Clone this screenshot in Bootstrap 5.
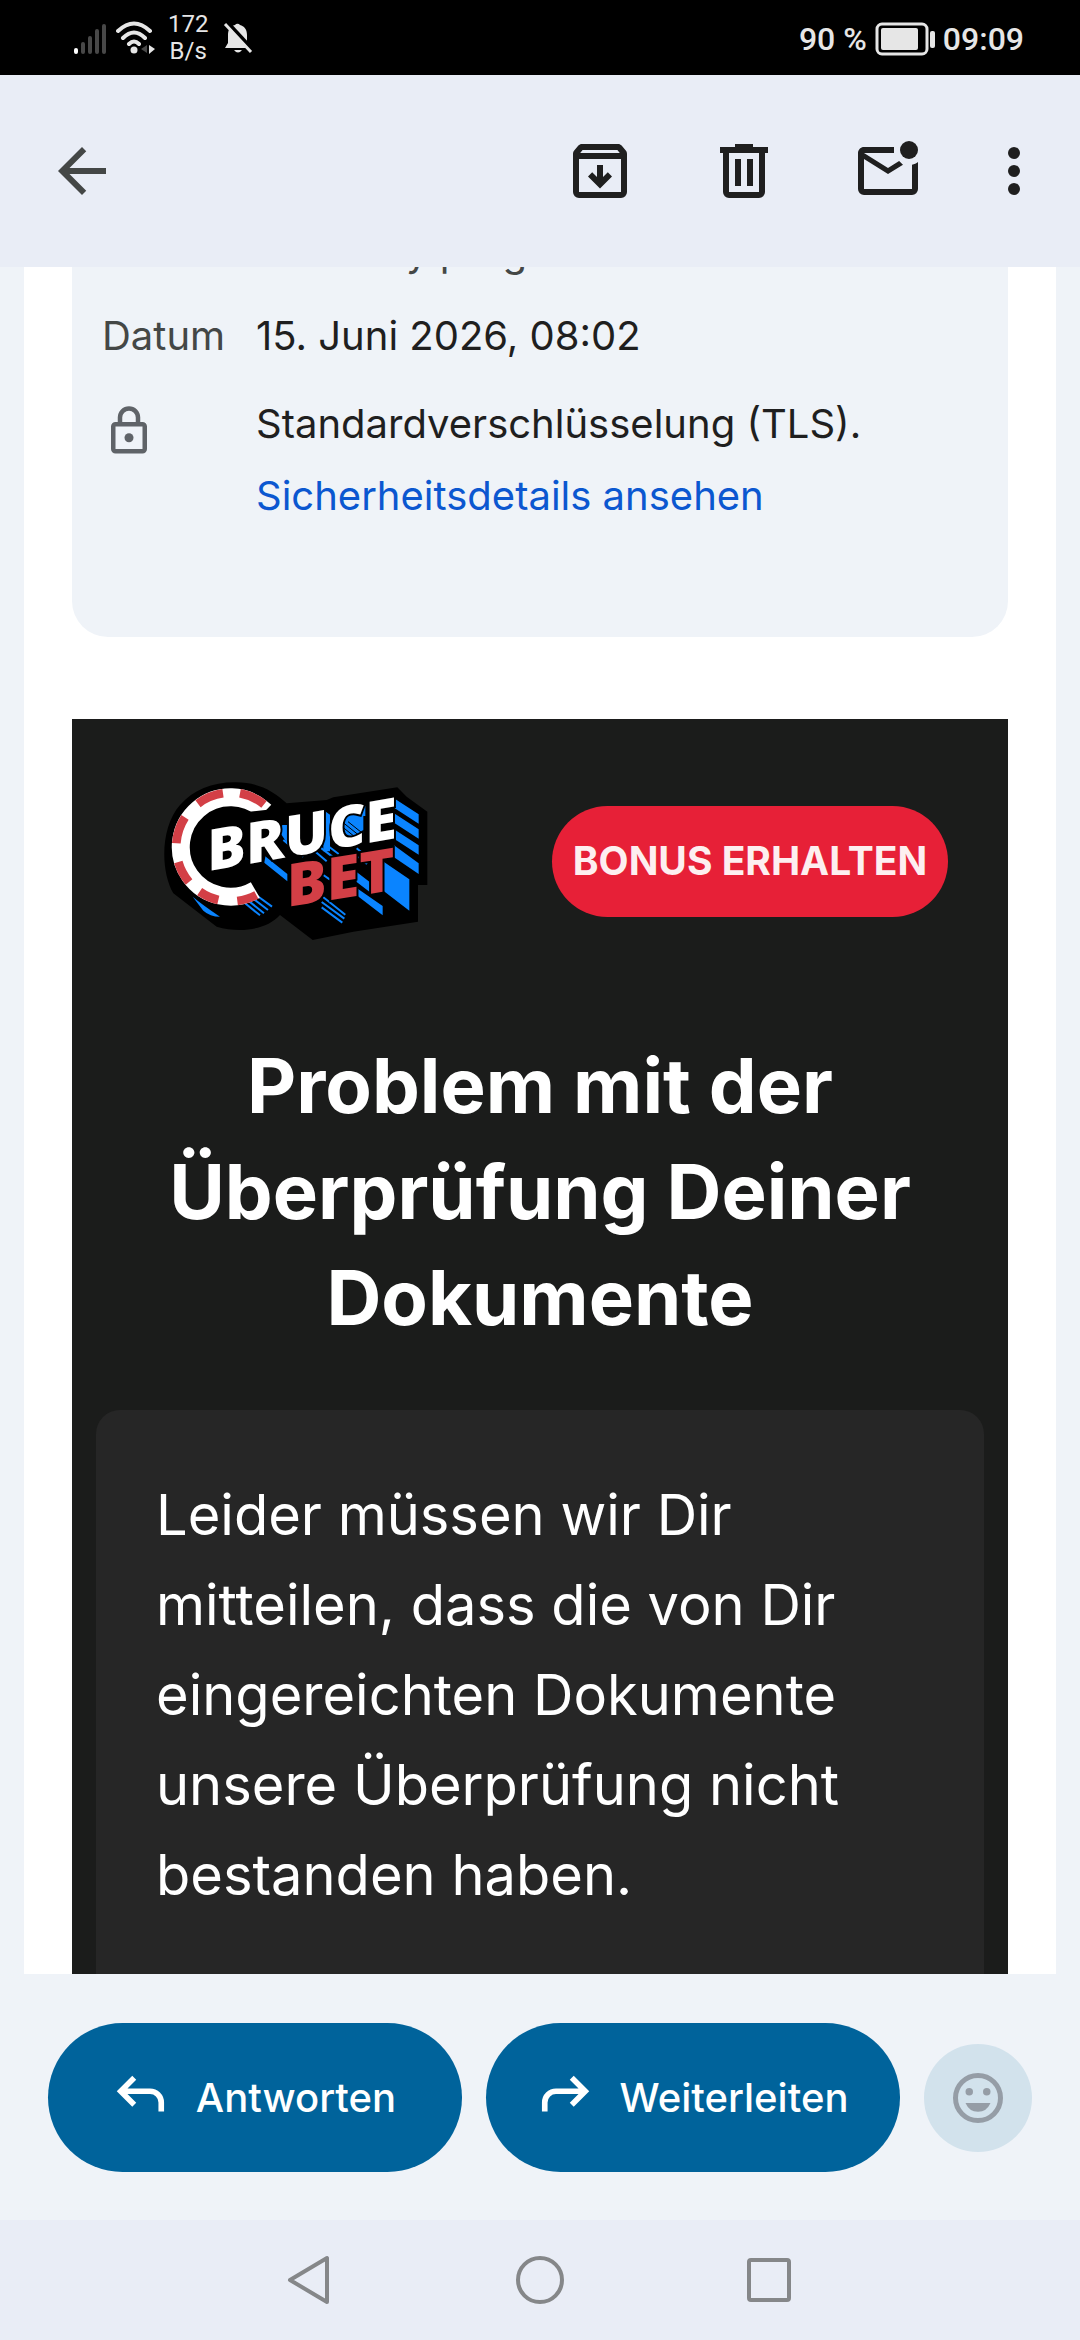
<!DOCTYPE html>
<html lang="de">
<head>
<meta charset="utf-8">
<meta name="viewport" content="width=device-width, initial-scale=1">
<title>E-Mail</title>
<link href="https://cdn.jsdelivr.net/npm/bootstrap@5.3.0/dist/css/bootstrap.min.css" rel="stylesheet">
<style>
  body { font-family: Inter, "Liberation Sans", sans-serif; background: #eff3f8; color: #1f1f1f; font-size: 40px; line-height: 72px; }
  svg { display: block; flex: none; }
  .status-bar { background: #000; color: #e6e6e6; height: 75px; padding: 0 56px 0 72px; font-family: Roboto, sans-serif; font-size: 34px; line-height: 40px; }
  .net-speed { font-size: 24px; line-height: 27px; margin: 0 14px 0 12px; }
  .clock-group { font-size: 32px; font-weight: 500; padding-top: 2px; }
  .app-bar { background: #e9edf6; height: 192px; padding: 0 30px 0 46px; }
  .app-tools { gap: 72px; }
  .icon-btn { background: none; border: 0; padding: 0; color: #1f1f1f; }
  .dots-btn { margin-left: -18px; }
  .back-btn { color: #444746; }
  .mail-sheet { background: #fff; margin: 0 24px; padding: 0 48px; }
  .mail-details { background: #eff3f8; border-radius: 0 0 36px 36px; padding: 0 30px 105px; }
  .cut-line { height: 8px; overflow: hidden; color: #444746; line-height: 46px; padding-left: 304px; }
  .detail-label { width: 154px; flex: none; color: #444746; }
  .detail-list { padding-top: 25px; gap: 16px; }
  .detail-link { color: #0b57d0; }
  .promo { background: #1b1c1b; color: #fff; margin-top: 82px; padding: 0 24px; }
  .promo-head { padding: 62px 36px 91px 68px; }
  .bonus-btn, .bonus-btn:hover { background: #e72037; color: #fdeff0; height: 111px; width: 396px; border-radius: 56px; border: 0; font-weight: 700; font-size: 39px; padding: 0; white-space: nowrap; }
  .promo-title { font-size: 76px; line-height: 106px; font-weight: 700; margin: 0 0 60px; }
  .promo-body { background: #262626; border-radius: 24px 24px 0 0; padding: 60px 60px 54px; font-size: 56px; line-height: 90px; }
  .reply-bar { padding: 49px 48px 48px; gap: 24px; }
  .reply-btn, .reply-btn:hover { background: #00639b; color: #fff; height: 149px; border: 0; border-radius: 75px; font-size: 40px; font-weight: 500; gap: 28px; padding: 0; flex: 1 1 0; }
  .emoji-btn { width: 108px; height: 108px; background: #d2e2ec; border: 0; padding: 0; color: #959da6; flex: none; }
  .nav-keys { background: #e9edf6; height: 120px; gap: 169px; }
</style>
<script src="https://cdn.jsdelivr.net/npm/bootstrap@5.3.0/dist/js/bootstrap.bundle.min.js"></script>
</head>
<body class="d-flex flex-column min-vh-100">

<div class="status-bar d-flex align-items-center justify-content-between">
  <div class="d-flex align-items-center">
    <svg width="36" height="34" viewBox="0 0 36 34" stroke-width="4" stroke-linecap="round"><path d="M4 29v2" stroke="#fff"/><path d="M11 23v8M18 17v14M25 10v21M32 5v26" stroke="#484848"/></svg>
    <svg class="ms-2" width="40" height="34" viewBox="0 0 40 34" fill="none" stroke="#e6e6e6" stroke-width="4" stroke-linecap="round"><path d="M2 10Q18-5 34 10M7 17Q18 6 29 17M13 23Q18 18 23 23"/><circle cx="18" cy="29" r="3.500" fill="#e6e6e6" stroke="none"/><path d="M33 24v9l6-5z" fill="#e6e6e6" stroke="none"/><path d="M31 24v8l-6-4z" fill="#484848" stroke="none"/></svg>
    <div class="net-speed text-center">172<br>B/s</div>
    <svg width="32" height="34" viewBox="0 0 32 34"><path d="M3 27h26l-4-6V14c0-6-3-9-7-10a3 3 0 0 0-5 0C8 5 6 9 6 14v8zM12 29h8q-4 5-8 0" fill="#e6e6e6"/><path d="M5 1l26 28" stroke="#000" stroke-width="4"/><path d="M3 3l26 28" stroke="#e6e6e6" stroke-width="3"/></svg>
  </div>
  <div class="clock-group d-flex align-items-center">
    <span>90 %</span>
    <svg class="ms-2" width="60" height="34" viewBox="0 0 60 34"><rect x="2" y="2" width="50" height="30" rx="5" fill="none" stroke="#e6e6e6" stroke-width="3"/><rect x="6" y="6" width="37" height="22" rx="2" fill="#e6e6e6"/><rect x="55" y="9" width="5" height="17" rx="2" fill="#e6e6e6"/></svg>
    <span class="ms-2">09:09</span>
  </div>
</div>

<header class="app-bar d-flex align-items-center justify-content-between">
  <button class="icon-btn back-btn" type="button" aria-label="Zurück"><svg width="72" height="72" viewBox="0 0 24 24" fill="currentColor"><path d="M20 11H7.830l5.590-5.590L12 4l-8 8 8 8 1.410-1.410L7.830 13H20z"/></svg></button>
  <div class="app-tools d-flex align-items-center">
    <button class="icon-btn" type="button" aria-label="Archivieren"><svg width="72" height="72" viewBox="0 0 24 24" fill="currentColor"><path fill-rule="evenodd" d="M6 3h12c.5 0 .9.200 1.200.5l1.400 1.700c.3.400.4.700.4 1.200V19a2 2 0 0 1-2 2H5a2 2 0 0 1-2-2V6.400c0-.5.100-.8.400-1.200l1.400-1.700C5.100 3.200 5.500 3 6 3zM6.200 5l-.8 1h13.200l-.8-1zM5 8v11h14V8zM11 10h2v4l1.600-1.600L16 13.800l-4 4-4-4 1.400-1.400L11 14z"/></svg></button>
    <button class="icon-btn" type="button" aria-label="Löschen"><svg width="72" height="72" viewBox="0 0 24 24" fill="currentColor"><path fill-rule="evenodd" d="M9 3h6v1h5v2h-1v13a2 2 0 0 1-2 2H7a2 2 0 0 1-2-2V6H4V4h5zM7 6v13h10V6zM9 8h2v9H9zM13 8h2v9h-2z"/></svg></button>
    <button class="icon-btn" type="button" aria-label="Als ungelesen markieren"><svg width="72" height="72" viewBox="0 0 24 24" fill="currentColor"><circle cx="19" cy="5" r="3"/><path d="M22 9v9a2 2 0 0 1-2 2H4a2 2 0 0 1-2-2V6c0-1.100.9-2 2-2h10v2H4l8 5 3.700-2.300 1.300 1.200-5 3.100-8-5v10h16V9.900c.8-.1 1.400-.4 2-.9z"/></svg></button>
    <button class="icon-btn dots-btn" type="button" aria-label="Weitere Optionen"><svg width="72" height="72" viewBox="0 0 24 24" fill="currentColor"><circle cx="12" cy="6" r="2"/><circle cx="12" cy="12" r="2"/><circle cx="12" cy="18" r="2"/></svg></button>
  </div>
</header>

<main class="mail-sheet flex-grow-1 d-flex flex-column">
  <section class="mail-details">
    <div class="cut-line d-flex align-items-end">y prog</div>
    <div class="detail-list d-flex flex-column">
      <div class="d-flex"><span class="detail-label">Datum</span><span>15. Juni 2026, 08:02</span></div>
      <div class="d-flex">
        <span class="detail-label pt-2"><svg class="mt-2" width="54" height="54" viewBox="0 0 24 24" fill="#5f6368"><path fill-rule="evenodd" d="M7 8V6a5 5 0 0 1 10 0v2h1a2 2 0 0 1 2 2v10a2 2 0 0 1-2 2H6a2 2 0 0 1-2-2V10a2 2 0 0 1 2-2zM9 8h6V6a3 3 0 0 0-6 0zM6 10v10h12V10z"/><circle cx="12" cy="15" r="2"/></svg></span>
        <div>Standardverschlüsselung (TLS).<br><a class="detail-link text-decoration-none" href="#">Sicherheitsdetails ansehen</a></div>
      </div>
    </div>
  </section>

  <article class="promo flex-grow-1 d-flex flex-column">
    <div class="promo-head d-flex align-items-center justify-content-between">
      <svg width="264" height="160" viewBox="72 63 792 480" role="img" aria-label="Bruce Bet">
        <path d="M285 67C350 66 400 92 440 130L560 120 580 112 772 82 800 110 862 155V375H834V485L640 515 518 540 420 465C380 510 300 520 230 500L100 400C60 330 62 200 120 135 160 90 215 67 285 67z" fill="#000"/>
        <g fill="#0a84ff">
          <path d="M158 410q30 25 82 60-30 0-50-18z"/>
          <path d="M370 284l72 58v22l-72-58zM405 195l40 60v-60zM550 150l20 14v110h-20zM595 165h75v75h-75zM664 138h12v30h-12z"/>
          <path d="M762 115l74 48v28l-74-48zM762 160l74 48v28l-74-48zM762 208l74 48v28l-74-48zM762 256l74 54v32l-74-50zM732 306l76 52v94l-76-58z"/>
          <path d="M650 336l44 34v30l-44-34zM650 384l78 54v28l-78-60z"/>
        </g>
        <g stroke="#0a84ff" stroke-width="6" fill="none">
          <path d="M308 424l52 42M320 418l52 42M332 410l52 40M344 402l52 38"/>
          <path d="M430 240l60 50M445 235l60 50M520 270l40 34M525 250l60 46M540 240l56 42M650 265l24 20M655 290l26 22"/>
          <path d="M545 442l62 46M545 426l68 50M550 412l66 52M550 345l20 14"/>
        </g>
        <path d="M600 195l50 40M612 190l50 40M624 185l50 40" stroke="#000" stroke-width="3"/>
        <path d="M375 154A149 149 0 1 0 346 390" fill="none" stroke="#fff" stroke-width="54"/>
        <path d="M300 100A163 163 0 0 1 372 133M174 131A163 163 0 0 1 249 100M109 250A163 163 0 0 1 135 172M115 306A163 163 0 0 0 147 366M179 395A163 163 0 0 0 235 420M292 423A163 163 0 0 0 349 405" fill="none" stroke="#d33f46" stroke-width="26"/>
        <path d="M300 158l130-14v50l-40 20-20 110-70 30z" fill="#000"/>
        <g font-family="'Open Sans', sans-serif" font-weight="800" stroke="#000" stroke-width="12" paint-order="stroke">
          <text transform="translate(202 334) skewY(-10)" font-size="172" fill="#fff">BRUCE</text>
          <text transform="translate(440 441) skewY(-9)" font-size="178" fill="#d33f46">BET</text>
        </g>
      </svg>
      <button class="btn bonus-btn" type="button">BONUS ERHALTEN</button>
    </div>
    <h1 class="promo-title text-center">Problem mit der Überprüfung Deiner Dokumente</h1>
    <p class="promo-body flex-grow-1 mb-0">Leider müssen wir Dir mitteilen, dass die von Dir eingereichten Dokumente unsere Überprüfung nicht bestanden haben.</p>
  </article>
</main>

<div class="reply-bar d-flex align-items-center">
  <button class="btn reply-btn d-flex align-items-center justify-content-center" type="button"><svg width="54" height="54" viewBox="0 0 24 24" fill="none" stroke="#fff" stroke-width="2.500"><path d="M9 3L3 9l6 6M3 9h13a5 5 0 0 1 5 5v4"/></svg>Antworten</button>
  <button class="btn reply-btn d-flex align-items-center justify-content-center" type="button"><svg width="54" height="54" viewBox="0 0 24 24" fill="none" stroke="#fff" stroke-width="2.500"><path d="M15 3l6 6-6 6M21 9H8a5 5 0 0 0-5 5v4"/></svg>Weiterleiten</button>
  <button class="btn emoji-btn rounded-circle d-flex align-items-center justify-content-center" type="button" aria-label="Emoji-Reaktion hinzufügen"><svg width="60" height="60" viewBox="0 0 24 24" fill="currentColor"><circle cx="12" cy="12" r="9" fill="none" stroke="currentColor" stroke-width="2"/><circle cx="8.500" cy="9.500" r="1.500"/><circle cx="15.500" cy="9.500" r="1.500"/><path d="M7 14h10q-1.500 3.500-5 3.500T7 14z"/></svg></button>
</div>

<nav class="nav-keys d-flex align-items-center justify-content-center">
  <button class="icon-btn" type="button" aria-label="Zurück"><svg width="60" height="60" viewBox="0 0 60 60" fill="none" stroke="#858789" stroke-width="4" stroke-linejoin="round"><path d="M9 30L46 8v44z"/></svg></button>
  <button class="icon-btn" type="button" aria-label="Startbildschirm"><svg width="60" height="60" viewBox="0 0 60 60" fill="none" stroke="#858789" stroke-width="4"><circle cx="30" cy="30" r="22"/></svg></button>
  <button class="icon-btn" type="button" aria-label="Übersicht"><svg width="60" height="60" viewBox="0 0 60 60" fill="none" stroke="#858789" stroke-width="4"><rect x="10" y="10" width="40" height="40" rx="2"/></svg></button>
</nav>
</body>
</html>
